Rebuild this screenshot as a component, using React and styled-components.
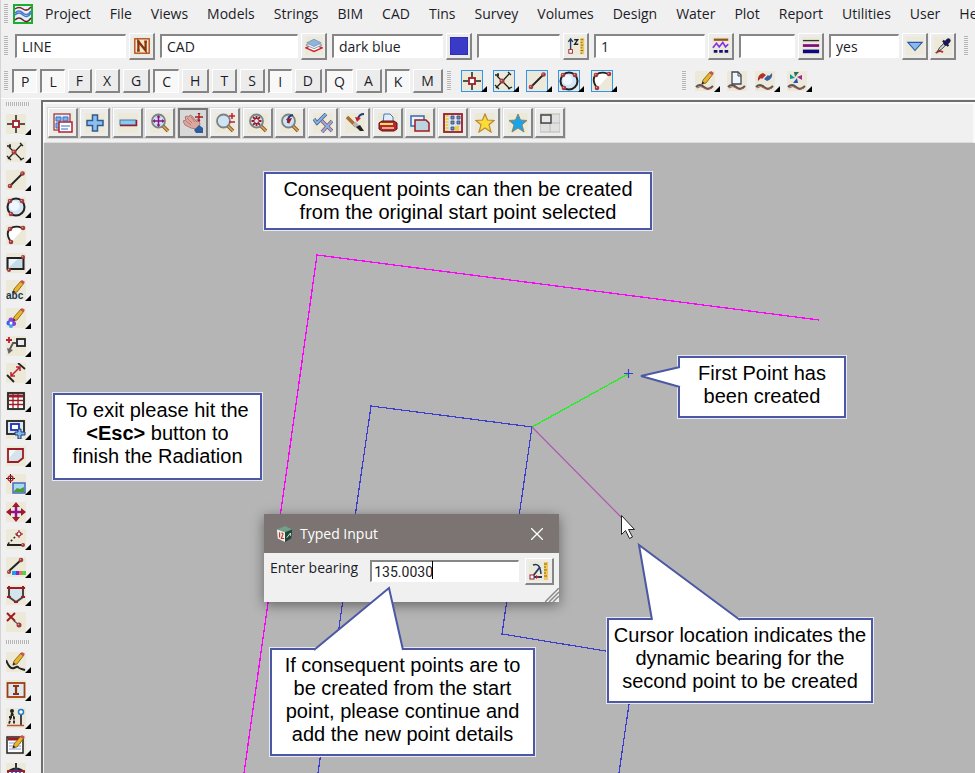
import React, { useState } from "react";
import styled, { createGlobalStyle, css } from "styled-components";

const RED = "#9c1c26";
const INK = "#222";

const Dot = ({ x, y, r = 2 }) => (
  <>
    <circle cx={x} cy={y} r={r} fill="#a03a40" />
    <circle cx={x - 0.5} cy={y - 0.5} r={r / 3} fill="#d99" />
  </>
);

const Pencil = () => (
  <>
    <path d="M7 13l1-4 7-8 3 2-7 9z" fill="#e9b52c" stroke="#7a5410" strokeWidth=".8" />
    <path d="M14 2l2-2 3 2-2 2z" fill="#c8505c" />
    <path d="M6.500 13.500l1-3 2 1.500z" fill={INK} />
  </>
);

const Lens = ({ children }) => (
  <>
    <path d="M13 13l5 5" stroke="#8a5a20" strokeWidth="3.500" />
    <path d="M13 13l5 5" stroke="#e0a860" strokeWidth="1.500" />
    <circle cx="8.500" cy="8" r="6.500" fill="#cfe4f3" stroke="#7b8288" strokeWidth="1.800" />
    {children}
  </>
);

const Wave = () => (
  <>
    <path d="M1 16q4-4 8 0t9-1" fill="none" stroke="#555" strokeWidth="2" />
    <path d="M2 17q4-3 7 0t8 0" fill="none" stroke="#b85858" strokeWidth="1" />
  </>
);

const glyphs = {
  logo: (
    <>
      <rect x="1" y="1" width="18" height="18" fill="#e4f1fa" stroke="#18b030" strokeWidth="2" />
      <path d="M2 5q4-3 8 0t8-2" fill="none" stroke="#8a2020" strokeWidth="1.500" />
      <path d="M2 9q4-4 8 0t8-2M2 11q4-4 8 0t8-2" fill="none" stroke="#4878c8" strokeWidth="1.500" />
      <path d="M2 16q4-4 8 0t8-2" fill="none" stroke="#6a2020" strokeWidth="1.500" />
    </>
  ),
  name: (
    <>
      <rect x="2" y="2" width="16" height="16" fill="#f3e7cf" stroke="#b04c18" strokeWidth="1.500" />
      <path d="M6 15V5l8 10V5M4.500 5h3M12.500 5h3M4.500 15h3" fill="none" stroke="#8a3208" strokeWidth="2.500" />
    </>
  ),
  layers: (
    <>
      <path d="M1 12l9 4 9-4-9-4z" fill="#fff" stroke="#d02030" strokeWidth="1.500" />
      <path d="M1 9l9 4 9-4-9-4z" fill="#e8f0f8" stroke="#8a98a8" />
      <path d="M2 6.500l8 4 8-4-8-4z" fill="#90b4dc" stroke="#7898b8" />
    </>
  ),
  colour: <rect x="0" y="0" width="20" height="20" fill="#3a3ac8" stroke="#2525a0" />,
  height: (
    <>
      <path d="M4 14V3M1.500 5.500L4 2l2.500 3.500" fill="none" stroke="#1c3c78" strokeWidth="1.500" />
      <rect x="2" y="14" width="4" height="4" fill="#fff" stroke={RED} />
      <path d="M8 3h4L8.500 8h4" fill="none" stroke={INK} strokeWidth="1.500" />
      <path d="M15 1h4v18h-4z" fill="#f0c860" />
      <path d="M15 3h3M15 6h2M15 9h3M15 12h2M15 15h3M15 18h2" stroke="#8a6410" />
    </>
  ),
  style: (
    <>
      <path d="M2 3h16" stroke="#98501c" strokeWidth="2.500" />
      <path d="M1 12l4-5 3 4 4-5 3 5 3-3" fill="none" stroke="#8030e8" strokeWidth="1.800" />
      <path d="M2 16h16" stroke="#101078" strokeWidth="3" strokeDasharray="4 2" />
    </>
  ),
  weight: (
    <>
      <path d="M1 4h18" stroke="#333" strokeWidth="1.500" />
      <path d="M1 9.500h18" stroke="#800880" strokeWidth="3" />
      <path d="M1 16h18" stroke="#080880" strokeWidth="4" />
    </>
  ),
  drop: <path d="M2 6h16l-8 9z" fill="#8cb8ec" stroke="#2858a8" strokeWidth="1.200" />,
  dropper: (
    <>
      <path d="M2 18q4-4 8-1" stroke="#b03030" strokeWidth="2" fill="none" />
      <path d="M4 16l2-4 6-6 2 2-6 6z" fill="#cfd4d8" stroke="#333" />
      <path d="M10 4l6 6" stroke="#181838" strokeWidth="2.500" />
      <path d="M13 7l3-3" stroke="#181858" strokeWidth="5" strokeLinecap="round" />
    </>
  ),
  point: (
    <>
      <path d="M10 1v5M10 14v5M1 10h5M14 10h5" stroke={INK} strokeWidth="1.500" />
      <rect x="7" y="7" width="6" height="6" fill="#fff" stroke={RED} strokeWidth="1.800" />
    </>
  ),
  cross: (
    <>
      <path d="M3 5l13 13M2 17L16 2M1 4l4 0M4 2v4M14 1l3 3M1 14l4 4M14 18l4-2" fill="none" stroke={INK} strokeWidth="1.300" />
      <Dot x={8} y={10} r={2.5} />
    </>
  ),
  line: (
    <>
      <path d="M4 16L16 4" stroke={INK} strokeWidth="1.800" />
      <Dot x={4} y={16} r={2.3} />
      <Dot x={16.5} y={3.5} r={2.3} />
    </>
  ),
  circle: (
    <>
      <circle cx="10" cy="10" r="8.500" fill="#d3e6f8" stroke={INK} strokeWidth="2" />
      <circle cx="8.500" cy="9" r="5" fill="#eff7ff" />
      <Dot x={4} y={4} r={2.3} />
      <Dot x={16} y={4} r={2.3} />
      <Dot x={5} y={17} r={2.3} />
    </>
  ),
  arc: (
    <>
      <path d="M5 17Q-1 7 6 3q6-3 11 1L9 13z" fill="#fff" />
      <path d="M5 17Q-1 8 4 4q5-4 12-1" fill="none" stroke={INK} strokeWidth="1.800" />
      <Dot x={4} y={4} r={2.3} />
      <Dot x={17} y={3} r={2.3} />
      <Dot x={5} y={17} r={2.3} />
    </>
  ),
  rect: (
    <>
      <rect x="1.500" y="5" width="16" height="11" fill="#c8dce8" stroke={INK} strokeWidth="2" />
      <path d="M3 14L12 6H3z" fill="#edf5fa" />
      <Dot x={17} y={4} />
      <Dot x={3} y={17} />
    </>
  ),
  textPencil: (
    <>
      <Pencil />
      <text x="0" y="19" fontSize="10" fontWeight="700" fill="#183858" fontFamily="Liberation Sans, sans-serif">abc</text>
    </>
  ),
  paintPencil: (
    <>
      <Pencil />
      <circle cx="5" cy="12" r="2.500" fill="#9040e0" />
      <circle cx="3" cy="15" r="2.500" fill="#4060e8" />
      <circle cx="7.500" cy="15.500" r="2.500" fill="#8040d8" />
      <circle cx="5" cy="18" r="2" fill="#40a0e8" />
      <circle cx="5" cy="15" r="1.500" fill="#fff" />
    </>
  ),
  leader: (
    <>
      <path d="M0 4h6M3 1v6" stroke="#c02030" strokeWidth="1.800" />
      <rect x="11" y="3" width="8" height="7" fill="#e6ecf0" stroke={INK} strokeWidth="1.800" />
      <path d="M10 7H7L3 15" fill="none" stroke="#555" strokeWidth="1.800" />
      <path d="M1 12l1.500 6L7 14z" fill="#666" />
    </>
  ),
  dimension: (
    <>
      <path d="M1 12l7 7M12 0l7 6" stroke={INK} strokeWidth="1.800" />
      <path d="M5 13L14 4M5 9v4h4M10 4h4v4" fill="none" stroke="#c02030" strokeWidth="1.500" />
    </>
  ),
  table: (
    <>
      <rect x="2" y="2" width="16" height="16" fill="#fff" stroke={INK} strokeWidth="1.800" />
      <path d="M3 5h14" stroke={RED} strokeWidth="3" />
      <path d="M3 9.500h14M3 13.500h14M7 3v14M12 3v14" stroke={RED} strokeWidth="1.300" />
    </>
  ),
  insert: (
    <>
      <rect x="1" y="2" width="17" height="13" fill="#dce9f2" stroke={INK} strokeWidth="1.800" />
      <rect x="5" y="5" width="8" height="6" fill="#fff" stroke="#2030b0" strokeWidth="1.800" />
      <path d="M12 10h3v3h4v3h-4v4h-3v-4H9v-3h3z" fill="#88bce8" stroke="#183878" />
    </>
  ),
  polygon: (
    <>
      <path d="M2 3h15v9l-5 4H2z" fill="#d6e3ea" stroke={RED} strokeWidth="1.800" />
      <path d="M3 12L10 4H3z" fill="#f2f7fa" />
    </>
  ),
  image: (
    <>
      <path d="M4.500 0v9M0 4.500h9" stroke={INK} />
      <circle cx="4.500" cy="4.500" r="2.500" fill="none" stroke="#c02030" strokeWidth="1.300" />
      <rect x="7" y="9" width="12" height="10" fill="#a8d8f8" stroke="#5068b8" strokeWidth="1.500" />
      <path d="M8 17l3-3 3 1 4-2v5H8z" fill="#48a030" />
    </>
  ),
  move: (
    <>
      <path d="M10 3v14M3 10h14" stroke="#8a1490" strokeWidth="2.500" />
      <path d="M10 0l4 5H6zM10 20l4-5H6zM0 10l5-4v8zM20 10l-5-4v8z" fill={RED} />
    </>
  ),
  vertexUp: (
    <>
      <path d="M2 15L12 5" stroke={INK} strokeWidth="1.500" strokeDasharray="2 2" />
      <path d="M1 16h15" stroke={INK} strokeWidth="2" />
      <path d="M13 1v8M9 5h8" stroke={RED} />
      <circle cx="13" cy="5" r="2" fill="#fff" stroke={RED} strokeWidth="1.200" />
      <Dot x={17} y={16} />
    </>
  ),
  lineColour: (
    <>
      <path d="M3 14L15 3" stroke={INK} strokeWidth="2" />
      <Dot x={3} y={15} />
      <Dot x={15} y={3} r={2.3} />
      <rect x="6" y="14" width="5" height="4" fill="#2098f8" />
      <rect x="10" y="14" width="3" height="4" fill="#7030d0" />
      <rect x="13" y="14" width="3" height="4" fill="#f07060" />
      <rect x="16" y="14" width="4" height="4" fill="#58d040" />
    </>
  ),
  shield: (
    <>
      <path d="M3 3h14v9l-7 5-7-5z" fill="#d3e4ee" stroke="#444" strokeWidth="2" />
      <path d="M1 3h4M3 1v4M15 3h4M17 1v4M1 12h4M15 12h4M8 17h4M3 3h14" stroke={RED} strokeWidth="2" />
    </>
  ),
  remove: (
    <>
      <path d="M1 1l8 8M9 1L1 9" stroke={RED} strokeWidth="2" />
      <path d="M8 9l4 3" stroke="#555" strokeWidth="1.300" />
      <Dot x={13} y={13} r={2.5} />
    </>
  ),
  sketch: (
    <>
      <path d="M0 8q4 10 8 8t4-1 7 3" fill="none" stroke={INK} strokeWidth="2" />
      <Pencil />
    </>
  ),
  textBox: (
    <>
      <rect x="1.500" y="3" width="17" height="14" fill="#dce9f0" stroke="#a03c14" strokeWidth="1.800" />
      <path d="M7 6h6M10 6v8M7 14h6" stroke="#90300c" strokeWidth="2.200" />
    </>
  ),
  survey: (
    <>
      <circle cx="6" cy="3" r="2" fill={INK} />
      <path d="M6 5L3 16M6 5l2 4v7M3 9h5" fill="none" stroke={INK} strokeWidth="1.800" strokeDasharray="3 1" />
      <path d="M15 6v11" stroke="#334" strokeWidth="1.800" />
      <circle cx="15" cy="4" r="2.500" fill="#fff" stroke="#2080c8" strokeWidth="1.500" />
      <path d="M1 17.500h17" stroke="#c05040" strokeWidth="1.500" />
    </>
  ),
  notes: (
    <>
      <rect x="1" y="2" width="16" height="16" fill="#fff" stroke={INK} strokeWidth="1.500" />
      <path d="M2 4h15" stroke={RED} strokeWidth="3" />
      <path d="M3 8h12M3 11h12M3 14h12" stroke="#80a0d8" />
      <Pencil />
    </>
  ),
  globe: (
    <>
      <path d="M10 0v8M2 9q8-7 16 0" fill="none" stroke={INK} strokeWidth="1.800" />
      <path d="M2 8h16v10H2z" fill="#e0ecf8" stroke={RED} strokeWidth="1.800" />
      <path d="M10 4v15M6 8v10M14 8v10" stroke="#2838b0" strokeWidth="1.500" />
    </>
  ),
  penWave: (
    <>
      <Wave />
      <Pencil />
    </>
  ),
  pageWave: (
    <>
      <path d="M5 1h6l3 3v9H5z" fill="#eef6fc" stroke="#445" strokeWidth="1.300" />
      <path d="M11 1v4h3" fill="none" stroke="#445" />
      <Wave />
    </>
  ),
  swapWave: (
    <>
      <path d="M3 10q-1-6 5-8l3 2-4 4-1-1z" fill="#b03030" />
      <path d="M17 2q1 6-5 8l-3-2 4-4 1 1z" fill="#3860a0" />
      <Wave />
    </>
  ),
  fanWave: (
    <>
      <path d="M8 6L7 1h5z" fill="#287050" />
      <path d="M8 7L3 8V3z" fill="#0898a0" />
      <path d="M10 7l1 5H6z" fill="#2850b0" />
      <path d="M10 6l5-2v5z" fill="#a02890" />
      <Wave />
    </>
  ),
  views: (
    <>
      <rect x="1" y="1" width="16" height="16" fill="#e4eef8" stroke="#9c2c34" strokeWidth="1.200" />
      <path d="M3 4h5v4H3zM10 4h5v4h-5zM3 10h5v5H3z" fill="#80b0e8" stroke="#3870c0" />
      <rect x="6" y="9" width="13" height="10" fill="#fff" stroke="#b02030" strokeWidth="1.500" />
      <path d="M8 13h9M8 16h7" stroke="#70a0e0" strokeWidth="1.300" />
    </>
  ),
  plus: <path d="M7.500 2h5v5.500H18v5h-5.500V18h-5v-5.500H2v-5h5.500z" fill="#8cc0f0" stroke="#335a90" strokeWidth="1.500" />,
  minus: (
    <>
      <rect x="2" y="7" width="16" height="5" fill="#8cc8f0" stroke="#4078b0" />
      <path d="M2 12.500h16.500V7" fill="none" stroke={RED} strokeWidth="1.500" />
    </>
  ),
  zoomExtents: (
    <Lens>
      <path d="M8.500 3v10M3.500 8h10" stroke="#8a1480" strokeWidth="1.500" />
      <path d="M8.500 2l2 2.500h-4zM8.500 14l2-2.500h-4zM2.500 8L5 6v4zM14.500 8L12 6v4z" fill="#8a1480" />
    </Lens>
  ),
  pan: (
    <>
      <path d="M0 8l3-1-1-3 2-1 2 1 1-2 2 1 5 6 0-3 2 0 1 6-4 4-5-1-6-3z" fill="#dba8a0" stroke="#a06860" strokeWidth=".8" />
      <path d="M4 5l5 5M3 8l5 4M8 4l4 5" stroke="#b06c64" strokeWidth=".8" />
      <path d="M11 17l5-5 4 3v5h-7z" fill="#2c5c9c" />
      <path d="M16 0v8M12 4h8M15 1l1-1 1 1M15 7l1 1 1-1" stroke={RED} strokeWidth="1.300" fill="none" />
    </>
  ),
  zoomInOut: (
    <>
      <Lens />
      <path d="M14 3h6M17 0v6M14 9h6" stroke="#c02030" strokeWidth="1.500" />
    </>
  ),
  zoomShrink: (
    <Lens>
      <path d="M5 4l2.500 2.500M12 4L9.500 6.500M5 12l2.500-2.500M12 12L9.500 9.500M8.500 3v3M8.500 10v3M3.500 8h3M10.500 8h3" stroke={RED} strokeWidth="1.800" />
    </Lens>
  ),
  zoomPrevious: (
    <Lens>
      <path d="M8 10V7q0-4 5-5" fill="none" stroke="#283878" strokeWidth="1.800" />
      <path d="M6 6l6-1-3 6z" fill={RED} />
    </Lens>
  ),
  ticks: (
    <>
      <path d="M1 6l3 4 9-9" fill="none" stroke="#485888" strokeWidth="3.500" />
      <path d="M1 6l3 4 9-9" fill="none" stroke="#80b4e8" strokeWidth="2" />
      <path d="M9 8l10 10M19 8L9 19" stroke="#a04858" strokeWidth="3.500" />
      <path d="M9 8l10 10M19 8L9 19" stroke="#80b4e8" strokeWidth="2" />
    </>
  ),
  brush: (
    <>
      <path d="M2 4l9 9" stroke="#a87030" strokeWidth="3.500" />
      <path d="M9 10l4 4" stroke="#b8b8b8" strokeWidth="4" />
      <path d="M11 14l4-2 4 6-4 0z" fill={INK} />
      <path d="M19 1q-5 0-6 5" fill="none" stroke="#283878" strokeWidth="2" />
      <path d="M10 4l6 1-4 4z" fill="#c02030" />
    </>
  ),
  print: (
    <>
      <path d="M6 1h6l3 3v6H5z" fill="#e0eefc" stroke="#4878c0" />
      <path d="M1 10l3-2h12l3 2v6l-3 2H4l-3-2z" fill="#b82830" stroke="#601018" />
      <path d="M2 11h13" stroke="#f8e060" strokeWidth="2" />
      <path d="M4 15h12" stroke="#f4d8a0" strokeWidth="1.500" />
    </>
  ),
  copyView: (
    <>
      <rect x="1" y="3" width="13" height="10" fill="#e8f2fa" stroke="#3868b0" strokeWidth="1.500" />
      <path d="M5 7h11l3 3v8H5z" fill="#bcd4e0" stroke={RED} strokeWidth="1.500" />
    </>
  ),
  plan: (
    <>
      <rect x="1" y="1" width="18" height="18" fill="#d8e4f0" stroke={RED} strokeWidth="1.800" />
      <path d="M4 2v16" stroke="#f0d040" strokeWidth="3" strokeDasharray="2 1" />
      <path d="M8 3h3v3H8zM14 3h3v3h-3zM8 8h3v3H8zM14 8h3v3h-3zM8 14h3v3H8z" fill="#6890c0" stroke="#446" strokeWidth=".8" />
      <path d="M12 13h4v5h-4z" fill="#f0d040" />
    </>
  ),
  star: <path d="M10 1l2.500 6 6.500.500-5 4.300 2 7.200-6-4-6 4 2-7.200-5-4.300 6.500-.500z" fill="#fcdc38" stroke="#b88838" strokeWidth="1.200" />,
  blueStar: <path d="M10 1l2.500 6 6.500.500-5 4.300 2 7.200-6-4-6 4 2-7.200-5-4.300 6.500-.500z" fill="#18a4e8" stroke="#8c8468" />,
  layout: (
    <>
      <path d="M0 1h20v18H0z" fill="#e0e0e0" stroke="#bbb" />
      <path d="M10 1v18M0 10h20" stroke="#bbb" />
      <rect x="1" y="2" width="10" height="8" fill="#e8e8e8" stroke="#444" strokeWidth="1.500" />
    </>
  ),
  bearing: (
    <>
      <path d="M4 15L11 6M5 16h8" stroke="#20386c" strokeWidth="1.800" />
      <path d="M4 4q7-3 8 9" fill="none" stroke="#20386c" strokeWidth="1.500" />
      <path d="M10 16l-3-2v4z" fill="#c02030" />
      <rect x="1" y="14" width="4" height="4" fill="#fff" stroke={RED} />
      <path d="M15 1h4v18h-4z" fill="#f0c860" />
      <path d="M15 3h3M15 6h2M15 9h3M15 12h2M15 15h3" stroke="#8a6410" />
    </>
  ),
  cube: (
    <>
      <path d="M1 5l9-4 8 4-8 3z" fill="#70a088" />
      <path d="M1 5l9 3v11l-8-4z" fill="#f0f0ec" />
      <path d="M10 8l8-3-1 10-7 4z" fill="#204838" />
      <path d="M4 8v6M6 9q3 0 1 3l-1 3h3" fill="none" stroke="#c83830" strokeWidth="1.300" />
      <path d="M12 14l4-5v3" fill="none" stroke="#e8f0e8" />
    </>
  ),
};

const Glyph = ({ name, size = 20 }) => (
  <svg width={size} height={size} viewBox="0 0 20 20" aria-hidden="true">
    {glyphs[name]}
  </svg>
);

const menus = [
  "Project", "File", "Views", "Models", "Strings", "BIM", "CAD", "Tins", "Survey",
  "Volumes", "Design", "Water", "Plot", "Report", "Utilities", "User", "Help",
];

const attributes = [
  { label: "Name", value: "LINE", width: 111, icon: "name" },
  { label: "Model", value: "CAD", width: 138, icon: "layers" },
  { label: "Colour", value: "dark blue", width: 111, icon: "colour" },
  { label: "Height", value: "", width: 83, icon: "height" },
  { label: "Linestyle", value: "1", width: 111, icon: "style" },
  { label: "Weight", value: "", width: 56, icon: "weight" },
  { label: "Tinable", value: "yes", width: 70, icon: "drop" },
];

const snaps = "PLFXGCHTSIDQAKM".split("");
const snapsOn = ["P", "L", "C", "I", "Q", "K"];

const shapeTools = ["point", "cross", "line", "circle", "arc"];
const waveTools = ["penWave", "pageWave", "swapWave", "fanWave"];

const sideTools = [
  "point", "cross", "line", "circle", "arc", "rect", "textPencil", "paintPencil",
  "leader", "dimension", "table", "insert", "polygon", "image", "move", "vertexUp",
  "lineColour", "shield", "remove",
];
const sideToolsMore = ["sketch", "textBox", "survey", "notes", "globe"];

const viewTools = [
  "views", "plus", "minus", "zoomExtents", "pan", "zoomInOut", "zoomShrink",
  "zoomPrevious", "ticks", "brush", "print", "copyView", "plan", "star",
  "blueStar", "layout",
];

const TypedInput = () => {
  const [bearing, setBearing] = useState("135.0030");

  return (
    <Dialog role="dialog" aria-label="Typed Input">
      <TitleBar>
        <Glyph name="cube" size={18} />
        <Title>Typed Input</Title>
        <CloseButton type="button" aria-label="Close">
          <svg width="12" height="12" viewBox="0 0 12 12">
            <path d="M0 0l12 12M12 0L0 12" stroke="#fff" strokeWidth="1.300" />
          </svg>
        </CloseButton>
      </TitleBar>
      <DialogBody>
        <label htmlFor="bearing">Enter bearing</label>
        <BearingField>
          <BearingInput
            id="bearing"
            value={bearing}
            onChange={(event) => setBearing(event.target.value)}
          />
          <Caret />
        </BearingField>
        <ToolButton type="button" aria-label="Measure bearing" $wide>
          <Glyph name="bearing" />
        </ToolButton>
      </DialogBody>
      <ResizeGrip width="14" height="14" viewBox="0 0 14 14">
        <path d="M0 14L14 0M4 14L14 4M8 14l6-6" stroke="#8a8a8a" strokeWidth="1.500" />
      </ResizeGrip>
    </Dialog>
  );
};

const App = () => {
  const [active, setActive] = useState(snapsOn);

  const toggle = (key) =>
    setActive((prev) =>
      prev.includes(key) ? prev.filter((k) => k !== key) : [...prev, key]
    );

  return (
    <Window>
      <GlobalStyle />
      <MenuBar>
        <Grip />
        <Glyph name="logo" />
        <MenuList>
          {menus.map((menu) => (
            <MenuItem type="button" key={menu}>
              {menu}
            </MenuItem>
          ))}
        </MenuList>
      </MenuBar>

      <AttributeBar>
        <Grip />
        {attributes.map(({ label, value, width, icon }) => (
          <Attribute key={label}>
            <TextField aria-label={label} defaultValue={value} $width={width} />
            <ToolButton type="button" aria-label={`Choose ${label}`}>
              <Glyph name={icon} size={18} />
            </ToolButton>
          </Attribute>
        ))}
        <ToolButton type="button" aria-label="Pick attributes">
          <Glyph name="dropper" size={18} />
        </ToolButton>
        <Grip />
      </AttributeBar>

      <SnapBar>
        <Grip />
        <Snaps>
          {snaps.map((key) => (
            <SnapButton
              type="button"
              key={key}
              aria-pressed={active.includes(key)}
              $on={active.includes(key)}
              onClick={() => toggle(key)}
            >
              {key}
            </SnapButton>
          ))}
        </Snaps>
        <Grip />
        <ShapeTools>
          {shapeTools.map((name) => (
            <FlatTool type="button" key={name} aria-label={name} $framed $more>
              <Glyph name={name} />
            </FlatTool>
          ))}
        </ShapeTools>
        <Grip />
        <WaveTools>
          {waveTools.map((name) => (
            <FlatTool type="button" key={name} aria-label={name} $more={name !== "pageWave"}>
              <Glyph name={name} />
            </FlatTool>
          ))}
        </WaveTools>
      </SnapBar>

      <Workspace>
        <SideBar>
          <Grip $wide />
          <SideTools>
            {sideTools.map((name) => (
              <SideSlot key={name}>
                <FlatTool type="button" aria-label={name} $more>
                  <Glyph name={name} />
                </FlatTool>
              </SideSlot>
            ))}
          </SideTools>
          <Grip $wide />
          <SideTools>
            {sideToolsMore.map((name) => (
              <SideSlot key={name}>
                <FlatTool type="button" aria-label={name} $more>
                  <Glyph name={name} />
                </FlatTool>
              </SideSlot>
            ))}
          </SideTools>
        </SideBar>

        <View>
          <ViewBar>
            {viewTools.map((name) => (
              <ViewButton type="button" key={name} aria-label={name} $on={name === "pan"}>
                <Glyph name={name} />
              </ViewButton>
            ))}
          </ViewBar>

          <Canvas>
            <Drawing width="931" height="630" viewBox="44 143 931 630">
              <g fill="none" shapeRendering="crispEdges">
                <path d="M819 320L317 255 244 773" stroke="#ff00ff" strokeWidth="1.300" />
                <path d="M318 773L371 406 532 427 502 634 636 656 619 773" stroke="#3c3cd0" strokeWidth="1.200" />
                <path d="M532 427L628 374" stroke="#20f020" strokeWidth="1.300" />
              </g>
              <path d="M532 427L622 518" stroke="#b455b4" strokeWidth="1.200" />
              <path d="M624 373.500h9M628.500 369v9" stroke="#3c3cd0" strokeWidth="1.200" />
            </Drawing>

            <TypedInput />

            <Callout $left={220} $top={29} $width={388} $space={4}>
              Consequent points can then be created
              <br />
              from the original start point selected
            </Callout>
            <Callout $left={9} $top={250} $width={209} $space={10}>
              To exit please hit the
              <br />
              <b>&lt;Esc&gt;</b> button to
              <br />
              finish the Radiation
            </Callout>
            <Callout $left={634} $top={213} $width={168}>
              First Point has
              <br />
              been created
            </Callout>
            <Callout $left={563} $top={475} $width={266}>
              Cursor location indicates the
              <br />
              dynamic bearing for the
              <br />
              second point to be created
            </Callout>
            <Callout $left={226} $top={505} $width={265}>
              If consequent points are to
              <br />
              be created from the start
              <br />
              point, please continue and
              <br />
              add the new point details
            </Callout>

            <Drawing width="931" height="630" viewBox="44 143 931 630">
              <g fill="#fff" stroke="#4c58a4" strokeWidth="2">
                <path d="M680 367L641 376 680 387" />
                <path d="M652 620L639 545 740 620" />
                <path d="M314 650L389 588 403 650" />
              </g>
              <path
                d="M621.500 515.500v19l4-4 4 8 3-1.500-4-7.500h6z"
                fill="#fff"
                stroke="#222"
              />
            </Drawing>
          </Canvas>
        </View>
      </Workspace>
    </Window>
  );
};

const GlobalStyle = createGlobalStyle`
  * {
    box-sizing: border-box;
  }
  body {
    margin: 0;
    background: #f0f0f0;
    color: #1c1c28;
    font: 14px/20px "Open Sans", "Noto Sans", sans-serif;
  }
  button, input {
    font: inherit;
    color: inherit;
  }
  button {
    padding: 0;
    border: none;
    background: none;
  }
  svg {
    display: block;
    flex: none;
  }
`;

const raised = css`
  border: 1px solid #fff;
  border-right: 2px solid #858585;
  border-bottom: 2px solid #858585;
  background: #ececea;
`;

const sunken = css`
  border: 2px solid #868686;
  border-right: 1px solid #fff;
  border-bottom: 1px solid #fff;
`;

const Window = styled.div`
  display: flex;
  flex-direction: column;
  height: 100vh;
  overflow: hidden;
  border-left: 1px solid #d4d4d4;
`;

const Bar = styled.div`
  display: flex;
  align-items: center;
  flex: none;
  padding-left: 3px;
  white-space: nowrap;
`;

const MenuBar = styled(Bar)`
  height: 28px;
  gap: 5px;
`;

const AttributeBar = styled(Bar)`
  height: 36px;
  gap: 5px;

  > :first-child {
    margin-right: 2px;
  }
  > :nth-last-child(2) {
    margin-left: -3px;
  }
  > :last-child {
    margin-left: 3px;
  }
`;

const SnapBar = styled(Bar)`
  height: 34px;
  gap: 4px;
`;

const Grip = styled.span`
  display: block;
  flex: none;
  width: ${(props) => (props.$wide ? "24px" : "4px")};
  height: ${(props) => (props.$wide ? "4px" : "20px")};
  background: repeating-linear-gradient(
    ${(props) => (props.$wide ? "90deg" : "180deg")},
    #b4b4b4 0 1px,
    #f4f4f4 1px 2px
  );
`;

const MenuList = styled.nav`
  display: flex;
  gap: 19px;
  padding-left: 7px;
`;

const MenuItem = styled.button`
  flex: none;
`;

const Attribute = styled.div`
  display: flex;
  align-items: center;
  gap: 3px;
`;

const TextField = styled.input`
  ${sunken}
  width: ${(props) => props.$width}px;
  height: 24px;
  padding: 0 5px;
  background: #fff;
  outline: none;
`;

const ToolButton = styled.button`
  ${raised}
  display: grid;
  place-items: center;
  flex: none;
  width: ${(props) => (props.$wide ? "29px" : "26px")};
  height: 27px;

  svg {
    background: #ece9d8;
  }
`;

const Snaps = styled.div`
  display: flex;
  gap: 3px;
`;

const SnapButton = styled.button`
  ${(props) => (props.$on ? sunken : raised)}
  min-width: 24px;
  height: 24px;
  padding: 0 7px;
  line-height: 20px;
  background: ${(props) => (props.$on ? "#f8f8f8" : "#ececec")};
`;

const FlatTool = styled.button`
  position: relative;
  width: 20px;
  height: 20px;
  background: #ece9d8;
  box-shadow: ${(props) => (props.$framed ? "0 0 0 1px #2e96f0" : "none")};

  &::after {
    content: "";
    display: ${(props) => (props.$more ? "block" : "none")};
    position: absolute;
    right: -5px;
    bottom: -1px;
    border: 3px solid #000;
    border-top-color: transparent;
    border-left-color: transparent;
  }
`;

const ShapeTools = styled.div`
  display: flex;
  gap: 12px;
  padding: 0 66px 0 7px;

  > :nth-child(even) {
    margin-right: 1px;
  }
`;

const WaveTools = styled.div`
  display: flex;
  gap: 12px;
  padding-left: 5px;

  > :nth-child(2) {
    margin-right: -4px;
  }
`;

const Workspace = styled.div`
  display: flex;
  flex: 1;
  min-height: 0;
  border-top: 1px solid #fff;
`;

const SideBar = styled.aside`
  flex: none;
  width: 40px;
  padding: 3px 0 0 5px;
  overflow: hidden;
`;

const SideTools = styled.div`
  padding: 4px 0;
`;

const SideSlot = styled.div`
  display: flex;
  align-items: center;
  height: 28px;

  &:nth-child(3n) {
    height: 27px;
  }
`;

const View = styled.main`
  display: flex;
  flex-direction: column;
  flex: 1;
  min-width: 0;
  margin-top: 1px;
  border: 2px solid #6f6f6f;
  border-right: none;
  border-bottom: none;
`;

const ViewBar = styled.div`
  display: flex;
  align-items: center;
  flex: none;
  gap: 2px;
  height: 41px;
  padding-left: 3px;
  border: 2px solid #fafafa;
  border-bottom: 1px solid #dcdcdc;
`;

const ViewButton = styled.button`
  ${raised}
  display: grid;
  place-items: center;
  flex: none;
  width: 30px;
  height: 30px;
  box-shadow: 0 0 0 1px #d8d8d8;
  ${(props) =>
    props.$on &&
    css`
      border: 2px solid #777;
      background: #d8d8d8;
    `}

  &:nth-child(even) {
    margin-right: 1px;
  }

  svg {
    background: ${(props) => (props.$on ? "none" : "#ece9d8")};
  }
`;

const Canvas = styled.div`
  position: relative;
  flex: 1;
  min-height: 0;
  overflow: hidden;
  margin-left: 1px;
  background: #b5b5b5;
`;

const Drawing = styled.svg`
  position: absolute;
  left: 0;
  top: 0;
  pointer-events: none;
`;

const Callout = styled.p`
  position: absolute;
  left: ${(props) => props.$left}px;
  top: ${(props) => props.$top}px;
  width: ${(props) => props.$width}px;
  margin: 0;
  padding: 4px 4px ${(props) => props.$space ?? 8}px;
  border: 2px solid #4c58a4;
  outline: 1px solid #e8e8f4;
  background: #fff;
  color: #000;
  font: 20px/23px "Liberation Sans", Arial, sans-serif;
  text-align: center;
`;

const Dialog = styled.section`
  position: absolute;
  left: 220px;
  top: 371px;
  width: 295px;
  background: #f0f0f0;
  box-shadow: 0 3px 12px rgba(0, 0, 0, 0.45);
`;

const TitleBar = styled.header`
  display: flex;
  align-items: center;
  gap: 6px;
  height: 39px;
  padding: 0 16px 0 12px;
  background: #7b7472;
  color: #fff;
`;

const Title = styled.span`
  flex: 1;
`;

const CloseButton = styled.button`
  display: grid;
  place-items: center;
`;

const DialogBody = styled.div`
  display: flex;
  align-items: flex-start;
  gap: 6px;
  height: 49px;
  padding: 5px 5px 0 6px;
`;

const BearingField = styled.div`
  position: relative;
  flex: 1;
  margin-left: 6px;
`;

const BearingInput = styled.input`
  ${sunken}
  display: block;
  width: 100%;
  height: 22px;
  margin-top: 2px;
  padding: 0 2px;
  background: #fff;
  outline: none;
  font-family: Roboto, sans-serif;
`;

const Caret = styled.i`
  position: absolute;
  left: 62px;
  top: 3px;
  width: 1px;
  height: 18px;
  background: #000;
`;

const ResizeGrip = styled.svg`
  position: absolute;
  right: 0;
  bottom: 0;
`;

export default App;
